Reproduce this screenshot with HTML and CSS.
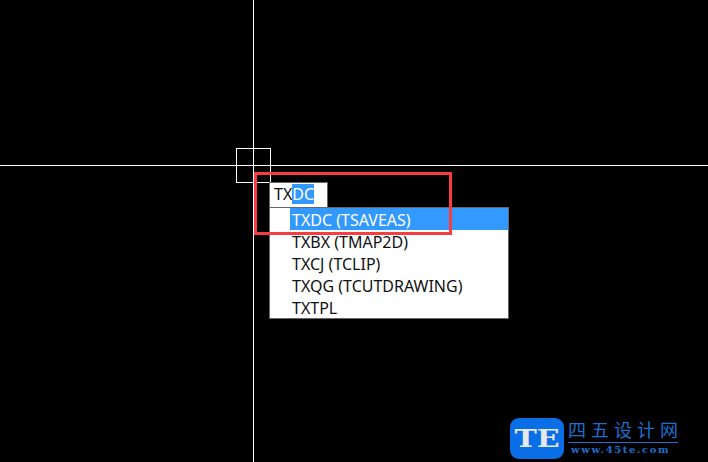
FILE: index.html
```html
<!doctype html>
<html lang="en">

<head>
	<meta charset="UTF-8">
	<title>TXDC</title>
	<link rel="stylesheet" href="styles.css">
</head>

<body>
	<div class="canvas">
		<div class="cross-v"></div>
		<div class="cross-h"></div>
		<div class="pickbox"></div>

		<div class="cmd-input">TX<span class="sel">DC</span></div>
		<ul class="cmd-list">
			<li class="active"><span>TXDC (TSAVEAS)</span></li>
			<li><span>TXBX (TMAP2D)</span></li>
			<li><span>TXCJ (TCLIP)</span></li>
			<li><span>TXQG (TCUTDRAWING)</span></li>
			<li><span>TXTPL</span></li>
		</ul>

		<div class="mark"></div>

		<div class="logo">
			<div class="logo-badge"><span>TE</span></div>
			<div class="logo-text">
				<p class="logo-cn">四五设计网</p>
				<p class="logo-url">www.45te.com</p>
			</div>
		</div>
	</div>
</body>

</html>
```

FILE: styles.css
```css
* {
	padding: 0;
	margin: 0;
	box-sizing: border-box;
}

body {
	background: #000;
	overflow: hidden;
}

.canvas {
	position: relative;
	width: 708px;
	height: 462px;
	background: #000;
	font-family: "Noto Sans", "Open Sans", sans-serif;
}

.cross-v {
	position: absolute;
	left: 253px;
	top: 0;
	width: 1px;
	height: 462px;
	background: #fff;
}

.cross-h {
	position: absolute;
	left: 0;
	top: 165px;
	width: 708px;
	height: 1px;
	background: #fff;
}

.pickbox {
	position: absolute;
	left: 236px;
	top: 148px;
	width: 35px;
	height: 35px;
	border: 1px solid #fff;
}

.cmd-input {
	position: absolute;
	left: 269px;
	top: 182px;
	width: 59px;
	height: 25px;
	padding: 1px 0 0 4px;
	background: #fff;
	border: 1px solid #666;
	border-bottom: 0;
	color: #111;
	font-size: 16px;
	line-height: 20px;
}

.sel {
	display: inline-block;
	background: #3399ff;
	color: #fff;
}

.cmd-list {
	position: absolute;
	left: 269px;
	top: 207px;
	width: 240px;
	height: 112px;
	background: #fff;
	border: 1px solid #666;
	list-style: none;
	color: #111;
	font-size: 16px;
	line-height: 22px;
}

.cmd-list li {
	height: 22px;
	padding-left: 20px;
}

.cmd-list li span {
	display: block;
	height: 22px;
	padding-left: 2px;
	line-height: 24px;
}

.cmd-list li.active span {
	background: #3399ff;
	color: #fff;
}

.mark {
	position: absolute;
	left: 254px;
	top: 172px;
	width: 198px;
	height: 63px;
	border: 3px solid #f93c40;
}

.logo {
	position: absolute;
	left: 510px;
	top: 418px;
	display: flex;
	gap: 4px;
}

.logo-badge {
	width: 54px;
	height: 41px;
	background: #0a6fe6;
	border-radius: 9px;
	color: #e8e8e8;
	font-family: "DejaVu Serif", serif;
	font-weight: bold;
	font-size: 24px;
	line-height: 41px;
	text-align: center;
}

.logo-badge span {
	display: inline-block;
	transform: scaleX(1.25);
}

.logo-text {
	color: #1f6fd0;
}

.logo-cn {
	width: 110px;
	font-family: "Noto Sans CJK SC", sans-serif;
	font-size: 18px;
	line-height: 23px;
	letter-spacing: 5px;
	padding-bottom: 1px;
	border-bottom: 1px solid #1f6fd0;
	white-space: nowrap;
}

.logo-url {
	font-family: "DejaVu Serif", serif;
	font-weight: bold;
	font-size: 10px;
	line-height: 14px;
	letter-spacing: 1.6px;
	padding-left: 3px;
	white-space: nowrap;
}
```
